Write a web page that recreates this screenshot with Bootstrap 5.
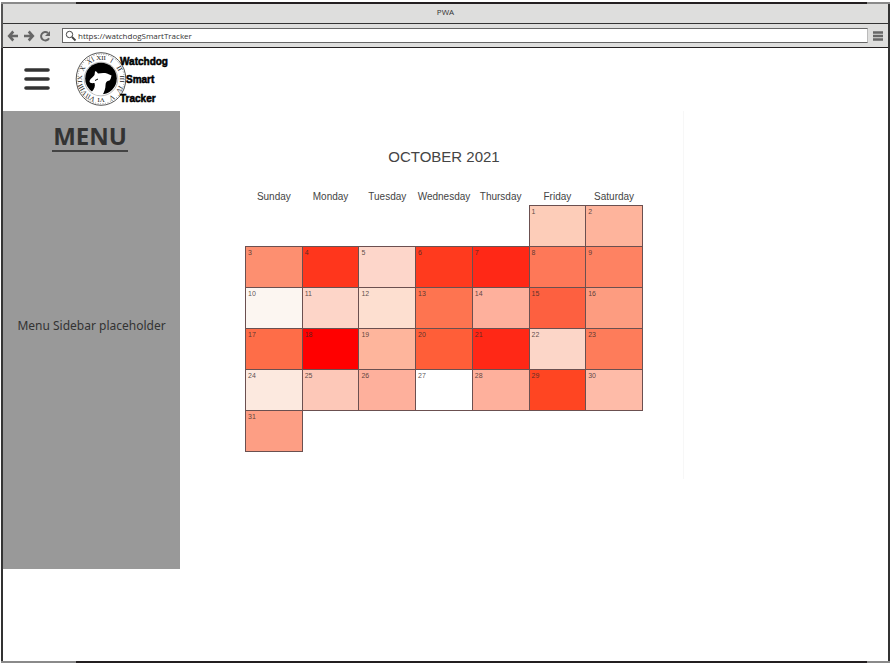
<!DOCTYPE html>
<html lang="en">
<head>
<meta charset="utf-8">
<meta name="viewport" content="width=device-width, initial-scale=1">
<title>PWA</title>
<link href="https://cdn.jsdelivr.net/npm/bootstrap@5.3.0/dist/css/bootstrap.min.css" rel="stylesheet">
<style>
  body { font-family: "Open Sans", sans-serif; color: #333; background: #fff; }
  .window { padding: 2px 4px 2px 1px; }
  .edge { height: 2px; flex: none; background: #231f20; border-left: 75px solid #8a8a8a; border-right: 23px solid #8a8a8a; }
  .chrome { background: #dededd; border-left: 2px solid #555; border-right: 2px solid #333; }
  .titlebar { height: 20px; font-size: 8px; line-height: 16px; border-bottom: 1px solid #333; }
  .toolbar { height: 24px; padding: 0 4px 0 4px; border-bottom: 1px solid #231f20; }
  .tool { width: 12px; height: 12px; line-height: 0; }
  .address { height: 15px; border: 1px solid #666; border-right-color: #bbb; background: #fff; margin: 0 4px 0 7px; padding-left: 2px; }
  .address input { font-size: 8px; line-height: 13px; color: #333; outline: 0; }
  .page { border-left: 2px solid #333; border-right: 2px solid #333; }
  .brandbar { height: 63px; padding: 0 0 2px 21px; }
  .content { padding-bottom: 92px; }
  .sidebar { width: 20%; background: #999; font-family: "Noto Sans", sans-serif; font-size: 12px; padding-bottom: 70px; }
  .sidebar h1 { font-family: "Open Sans", sans-serif; font-size: 24px; line-height: 34px; padding-top: 8px; font-weight: 700; }
  .sidebar h1 span { border-bottom: 2px solid #444; padding: 0 1px; display: inline-block; line-height: 28px; margin-right: 3px; }
  .calendar { width: 489px; height: 368px; margin-left: 15px; padding: 36px 40px 0 50px; border-right: 1px solid #f7f7f7; font-family: "Liberation Sans", sans-serif; color: #444; }
  .calendar caption { caption-side: top; padding: 0 0 25px; font-size: 15px; line-height: 20px; text-align: center; color: #444; }
  .calendar table { width: 398px; table-layout: fixed; border-collapse: collapse; }
  .calendar th { font-size: 10px; line-height: 10px; height: 13px; font-weight: 400; text-align: center; vertical-align: top; padding: 0; }
  .calendar td { height: 41px; font-size: 7px; line-height: 8px; padding: 2px 0 0 2px; vertical-align: top; color: rgba(50,40,40,.8); }
  .calendar td.day { border: 1px solid #6b5050; }
</style>
</head>
<body>
<div class="window d-flex flex-column min-vh-100">
  <div class="edge"></div>
  <header class="chrome">
    <div class="titlebar text-center">PWA</div>
    <div class="toolbar d-flex align-items-center">
      <button class="tool btn p-0 border-0 rounded-0" aria-label="Back"><svg width="12" height="12" viewBox="0 0 12 12" fill="none" stroke="#666" stroke-width="2.600"><path d="M6.300 1.500 2.200 6l4.100 4.500M2.500 6H11"/></svg></button>
      <button class="tool btn p-0 border-0 rounded-0 ms-1" aria-label="Forward"><svg width="12" height="12" viewBox="0 0 12 12" fill="none" stroke="#666" stroke-width="2.600"><path d="M5.700 1.500 9.800 6l-4.100 4.500M9.500 6H1"/></svg></button>
      <button class="tool btn p-0 border-0 rounded-0 ms-1 me-1" aria-label="Reload"><svg width="12" height="12" viewBox="0 0 12 12"><path d="M10 8.200A4.200 4.200 0 1 1 9 3" fill="none" stroke="#666" stroke-width="2"/><path d="M11 1v5H6z" fill="#666"/></svg></button>
      <div class="address d-flex align-items-center flex-grow-1">
        <svg width="13" height="12" viewBox="0 0 13 12" fill="none" stroke="#444"><circle cx="4.500" cy="4.500" r="3.200"/><path d="m7 7 3.500 3.500" stroke-width="1.800"/></svg>
        <input class="border-0 p-0 flex-grow-1 bg-transparent" type="text" aria-label="Address" value="https://watchdogSmartTracker">
      </div>
      <button class="tool btn p-0 border-0 rounded-0" aria-label="Browser menu"><svg width="12" height="12" viewBox="0 0 12 12" stroke="#666" stroke-width="2.400"><path d="M1 2.500h10M1 6h10M1 9.500h10"/></svg></button>
    </div>
  </header>
  <div class="page d-flex flex-column flex-grow-1">
    <div class="brandbar d-flex align-items-center">
      <button class="btn p-0 border-0 lh-1" aria-label="Menu"><svg width="26" height="24" viewBox="0 0 26 24" stroke="#333" stroke-width="3.600" stroke-linecap="round"><path d="M2 3h22M2 12h22M2 21h22"/></svg></button>
      <a href="#" class="ms-4 lh-1" aria-label="Watchdog Smart Tracker">
        <svg width="100" height="56" viewBox="0 0 100 56">
          <g fill="none" stroke="#555"><ellipse cx="27" cy="28" rx="24.800" ry="26.300"/><ellipse cx="27" cy="28" rx="23.300" ry="24.800" stroke-width=".6" stroke-dasharray="1 1.500"/><circle cx="27" cy="28" r="16.800" stroke="#888" stroke-width=".6"/></g>
          <circle cx="27" cy="27.500" r="15.800"/>
          <path d="M21 20.500c.8-1 2 .3 3 2 3-.4 6-.8 9 0l4.500 2c-.5 2-.8 4-2 5-3 .5-4 2-4 5 0 3-1 6-3 9.500-4 .6-8-.4-11-3 3-3 4-6 3-9-3 .4-5 0-5-2 1-3 4-4 5-6z" fill="#fff"/>
          <path d="m21 29.500 3-1.500" stroke="#000" fill="none"/>
          <g font-family="Liberation Serif, serif" font-size="7" text-anchor="middle" fill="#222">
            <text x="27" y="9">XII</text><text x="27" y="9" transform="rotate(30 27 28)">I</text><text x="27" y="9" transform="rotate(60 27 28)">II</text><text x="27" y="9" transform="rotate(90 27 28)">III</text><text x="27" y="9" transform="rotate(120 27 28)">IV</text><text x="27" y="9" transform="rotate(150 27 28)">V</text><text x="27" y="9" transform="rotate(180 27 28)">VI</text><text x="27" y="9" transform="rotate(210 27 28)">VII</text><text x="27" y="9" transform="rotate(240 27 28)">VIII</text><text x="27" y="9" transform="rotate(270 27 28)">IX</text><text x="27" y="9" transform="rotate(300 27 28)">X</text><text x="27" y="9" transform="rotate(330 27 28)">XI</text>
          </g>
          <g font-family="Liberation Sans, sans-serif" font-size="10" font-weight="700" fill="#000" stroke="#000" stroke-width=".5">
            <text x="46" y="14">Watchdog</text><text x="52" y="32">Smart</text><text x="46" y="51">Tracker</text>
          </g>
        </svg>
      </a>
    </div>
    <div class="content d-flex flex-grow-1">
      <aside class="sidebar d-flex flex-column text-center">
        <h1 class="m-0"><span>MENU</span></h1>
        <p class="my-auto">Menu Sidebar placeholder</p>
      </aside>
      <main class="calendar">
        <table>
          <caption>OCTOBER 2021</caption>
          <thead><tr><th>Sunday</th><th>Monday</th><th>Tuesday</th><th>Wednesday</th><th>Thursday</th><th>Friday</th><th>Saturday</th></tr></thead>
          <tbody id="days"></tbody>
        </table>
      </main>
    </div>
  </div>
  <div class="edge"></div>
</div>
<script>
  // Activity heat colour of each day, 1 to 31
  const heat = ["#fdcdb9","#feb49c","#fd8f70","#ff361c","#fdd6ca","#ff3a1e","#ff2816","#fe7858","#fe8262","#fcf6f1",
    "#fdd5c8","#fddfd0","#fe7450","#feb09c","#fd6040","#fd9c80","#fe6d48","#ff0000","#feb59c","#ff5e38",
    "#ff2816","#fcd6c8","#fe7c5a","#fce9df","#fdc8b8","#feb09c","#ffffff","#feb09c","#ff4522","#febba8","#fd9e84"];
  const body = document.getElementById("days");
  const firstWeekday = 5;
  for (let week = 0; week < 6; week++) {
    const row = body.insertRow();
    for (let d = 0; d < 7; d++) {
      const day = week * 7 + d - firstWeekday + 1;
      const cell = row.insertCell();
      if (day < 1 || day > 31) continue;
      cell.className = "day";
      cell.textContent = day;
      cell.style.backgroundColor = heat[day - 1];
    }
  }
</script>
<script src="https://cdn.jsdelivr.net/npm/bootstrap@5.3.0/dist/js/bootstrap.bundle.min.js"></script>
</body>
</html>
